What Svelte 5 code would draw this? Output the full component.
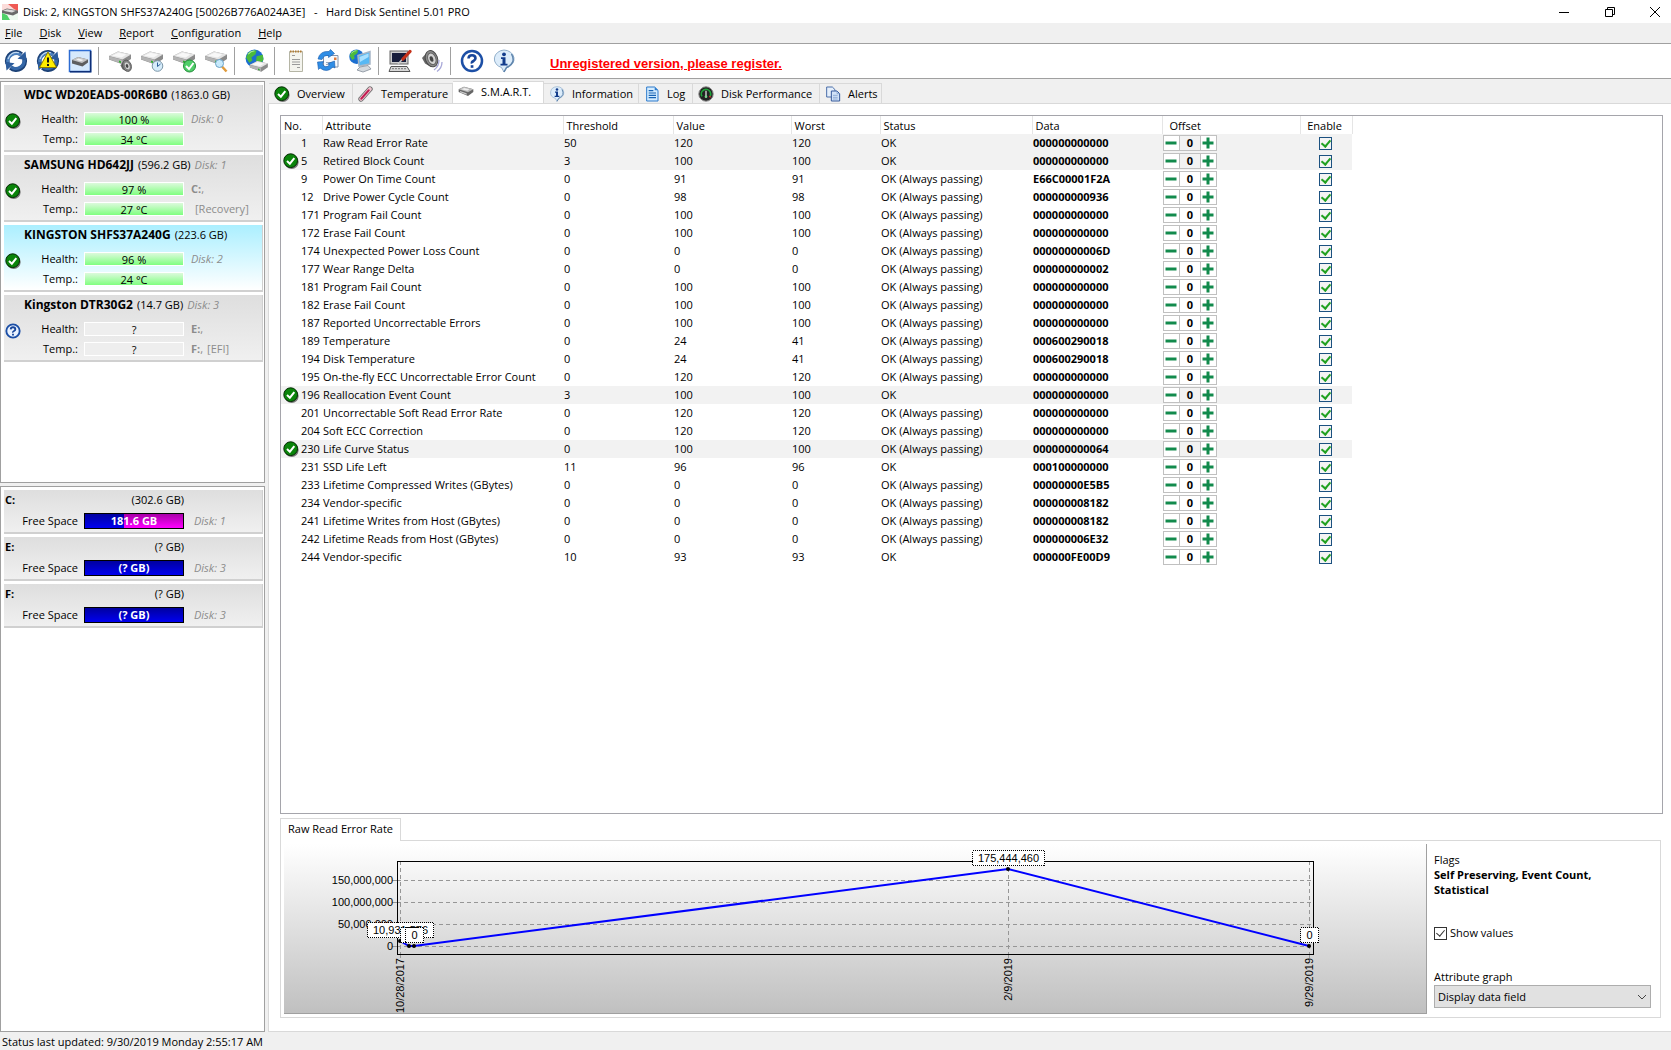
<script lang="ts">
  type Attribute = {
    no: number;
    name: string;
    threshold: number;
    value: number;
    worst: number;
    status: string;
    data: string;
    critical: boolean;
    icon: boolean;
    offset: number;
    enabled: boolean;
  };

  type Disk = {
    name: string;
    size: string;
    tag: string;
    health: string;
    temp: string;
    known: boolean;
    notes: { em?: string; drive?: string; label?: string }[];
  };

  const PASSING = 'OK (Always passing)';

  const menu = ['File', 'Disk', 'View', 'Report', 'Configuration', 'Help'];

  const toolbar = [
    [
      { icon: 'refresh', label: 'Refresh' },
      { icon: 'refresh-warn', label: 'Refresh problems' },
      { icon: 'disk-frame', label: 'Disk control' }
    ],
    [
      { icon: 'disk-speaker', label: 'Acoustic test' },
      { icon: 'disk-clock', label: 'Short self test' },
      { icon: 'disk-check', label: 'Extended self test' },
      { icon: 'disk-search', label: 'Surface test' }
    ],
    [{ icon: 'globe-disk', label: 'Online disk information' }],
    [
      { icon: 'report', label: 'Report' },
      { icon: 'mail', label: 'Send report' },
      { icon: 'network', label: 'Network status' }
    ],
    [
      { icon: 'configure', label: 'Configuration' },
      { icon: 'speaker', label: 'Sound alerts' }
    ],
    [
      { icon: 'help', label: 'Help' },
      { icon: 'info', label: 'About' }
    ]
  ];

  const disks: Disk[] = [
    { name: 'WDC WD20EADS-00R6B0', size: '1863.0 GB', tag: '', health: '100 %', temp: '34 °C', known: true, notes: [{ em: 'Disk: 0' }, {}] },
    { name: 'SAMSUNG HD642JJ', size: '596.2 GB', tag: 'Disk: 1', health: '97 %', temp: '27 °C', known: true, notes: [{ drive: 'C:' }, { label: '[Recovery]' }] },
    { name: 'KINGSTON SHFS37A240G', size: '223.6 GB', tag: '', health: '96 %', temp: '24 °C', known: true, notes: [{ em: 'Disk: 2' }, {}] },
    { name: 'Kingston DTR30G2', size: '14.7 GB', tag: 'Disk: 3', health: '?', temp: '?', known: false, notes: [{ drive: 'E:' }, { drive: 'F:', label: '[EFI]' }] }
  ];

  const partitions = [
    { letter: 'C:', size: '(302.6 GB)', free: '181.6 GB', disk: 'Disk: 1', used: 40 },
    { letter: 'E:', size: '(? GB)', free: '(? GB)', disk: 'Disk: 3', used: 100 },
    { letter: 'F:', size: '(? GB)', free: '(? GB)', disk: 'Disk: 3', used: 100 }
  ];

  const tabs = [
    { label: 'Overview', icon: 'ok' },
    { label: 'Temperature', icon: 'thermometer' },
    { label: 'S.M.A.R.T.', icon: 'disk' },
    { label: 'Information', icon: 'info' },
    { label: 'Log', icon: 'log' },
    { label: 'Disk Performance', icon: 'gauge' },
    { label: 'Alerts', icon: 'copy' }
  ];

  function attr(no: number, name: string, threshold: number, value: number, status: string, data: string, flags = '', worst = value): Attribute {
    return {
      no, name, threshold, value, worst, status, data,
      critical: flags !== '',
      icon: flags === 'icon',
      offset: 0,
      enabled: true
    };
  }

  let attributes = $state([
    attr(1, 'Raw Read Error Rate', 50, 120, 'OK', '000000000000', 'row'),
    attr(5, 'Retired Block Count', 3, 100, 'OK', '000000000000', 'icon'),
    attr(9, 'Power On Time Count', 0, 91, PASSING, 'E66C00001F2A'),
    attr(12, 'Drive Power Cycle Count', 0, 98, PASSING, '000000000936'),
    attr(171, 'Program Fail Count', 0, 100, PASSING, '000000000000'),
    attr(172, 'Erase Fail Count', 0, 100, PASSING, '000000000000'),
    attr(174, 'Unexpected Power Loss Count', 0, 0, PASSING, '00000000006D'),
    attr(177, 'Wear Range Delta', 0, 0, PASSING, '000000000002'),
    attr(181, 'Program Fail Count', 0, 100, PASSING, '000000000000'),
    attr(182, 'Erase Fail Count', 0, 100, PASSING, '000000000000'),
    attr(187, 'Reported Uncorrectable Errors', 0, 100, PASSING, '000000000000'),
    attr(189, 'Temperature', 0, 24, PASSING, '000600290018', '', 41),
    attr(194, 'Disk Temperature', 0, 24, PASSING, '000600290018', '', 41),
    attr(195, 'On-the-fly ECC Uncorrectable Error Count', 0, 120, PASSING, '000000000000'),
    attr(196, 'Reallocation Event Count', 3, 100, 'OK', '000000000000', 'icon'),
    attr(201, 'Uncorrectable Soft Read Error Rate', 0, 120, PASSING, '000000000000'),
    attr(204, 'Soft ECC Correction', 0, 120, PASSING, '000000000000'),
    attr(230, 'Life Curve Status', 0, 100, PASSING, '000000000064', 'icon'),
    attr(231, 'SSD Life Left', 11, 96, 'OK', '000100000000'),
    attr(233, 'Lifetime Compressed Writes (GBytes)', 0, 0, PASSING, '00000000E5B5'),
    attr(234, 'Vendor-specific', 0, 0, PASSING, '000000008182'),
    attr(241, 'Lifetime Writes from Host (GBytes)', 0, 0, PASSING, '000000008182'),
    attr(242, 'Lifetime Reads from Host (GBytes)', 0, 0, PASSING, '000000006E32'),
    attr(244, 'Vendor-specific', 10, 93, 'OK', '000000FE00D9')
  ]);

  let selectedDisk = $state(2);
  let activeTab = $state(2);
  let showValues = $state(true);
  let graphMode = $state('data');

  // chart geometry: 22px per 50 million, zero line at y = 102
  const PLOT_LEFT = 113;
  const PLOT_TOP = 17;
  const PLOT_BOTTOM = 110;
  const ZERO_Y = 102;
  const LAST_DAY = 701;
  const history = [
    { day: 0, value: 10931576, date: '10/28/2017' },
    { day: 7, value: 0, date: '' },
    { day: 11, value: 0, date: '' },
    { day: 469, value: 175444460, date: '2/9/2019' },
    { day: 701, value: 0, date: '9/29/2019' }
  ];
  const ticks = [0, 50000000, 100000000, 150000000];

  let chartWidth = $state(1142);
  let plotRight = $derived(chartWidth - 112);

  const toY = (value: number) => Math.round(ZERO_Y - (value / 50000000) * 22);
  let points = $derived(
    history.map((p) => {
      const text = p.value.toLocaleString('en-US');
      const commas = text.split(',').length - 1;
      return {
        ...p,
        text,
        x: Math.round(PLOT_LEFT + 3 + (p.day / LAST_DAY) * (plotRight - PLOT_LEFT - 8)),
        y: toY(p.value),
        boxWidth: (text.length - commas) * 6 + commas * 3 + 12
      };
    })
  );
  let dated = $derived(points.filter((p) => p.date));
  let line = $derived(points.map((p) => `${p.x},${p.y}`).join(' '));
</script>

{#snippet drive()}
  <path d="M1 7 10 2.500 23 5.500V10L15 15.500 1 10.500Z" fill="#8b8b8b" />
  <path d="M1 7 10 2.500 23 5.500 14.500 10.500Z" fill="#e4e4e4" />
  <path d="M4 6.800 10.500 3.800 18.500 5.600 13.500 8.600Z" fill="#f8f8f8" />
  <path d="M1 7.300V10.300L14.500 15V10.800Z" fill="#b4b4b4" />
  <path d="M11 11.600v1.800l2 .6v-1.800z" fill="#2fae2f" />
{/snippet}

{#snippet arrows()}
  <g fill="none" stroke-width="4.600">
    <path d="M3.600 14.500A8.600 8.600 0 0 1 17.500 5.500" stroke="#1d4277" />
    <path d="M20.400 9.500A8.600 8.600 0 0 1 6.500 18.500" stroke="#1d4277" />
    <path d="M3.800 13.500A8.400 8.400 0 0 1 17 6" stroke="#4a7fbd" stroke-width="3.200" />
    <path d="M20.200 10.500A8.400 8.400 0 0 1 7 18" stroke="#3568a8" stroke-width="3.200" />
    <path d="M4 10A8.500 8.500 0 0 1 15 3.800" stroke="#c3daf0" stroke-width="1.200" />
  </g>
  <path d="M21.500 2.500 22.500 11 13.500 9.800Z" fill="#2c5c9c" />
  <path d="M2.500 21.500 1.500 13 10.500 14.200Z" fill="#2c5c9c" />
{/snippet}

{#snippet globe()}
  <circle cx="10" cy="9" r="8.500" fill="#1c6fd0" />
  <path d="M4 3.500Q9 .5 12 1.500L11 5 7 8 8 11 5 13 2 8ZM12 7l6-1.500 .5 5-4 5-3-4Z" fill="#4cba3c" />
  <path d="M4 5Q7 1.500 10 2" stroke="#aef09a" fill="none" />
{/snippet}

{#snippet cone()}
  <path d="M2 9 6 4.500 11 1.500V18L5 14.500Z" fill="#666" />
  <ellipse cx="11.500" cy="9.700" rx="6" ry="8.300" transform="rotate(-20 11.500 9.700)" fill="#8a8a8a" stroke="#4b4b4b" />
  <ellipse cx="11.800" cy="9.800" rx="4" ry="6" transform="rotate(-20 11.800 9.800)" fill="#d2d2d2" stroke="#666" />
  <ellipse cx="11.500" cy="10" rx="1.800" ry="2.800" transform="rotate(-20 11.500 10)" fill="#444" />
{/snippet}

{#snippet icon(name: string)}
  <svg class="icon" viewBox="0 0 24 24" aria-hidden="true">
    {#if name === 'refresh'}
      {@render arrows()}
    {:else if name === 'refresh-warn'}
      {@render arrows()}
      <path d="M12 3 20.500 18.500H3.500Z" fill="#ffee00" stroke="#8a7a00" />
      <path d="M12 8.500v5M12 15v2" stroke="#111" stroke-width="2" />
    {:else if name === 'disk-frame'}
      <rect x="1.500" y="1.500" width="21" height="21" fill="#d6e9fc" stroke="#2d6cd2" stroke-width="1.500" />
      <path d="M22.700 2V22.700H2" fill="none" stroke="#0d2e77" stroke-width="1.500" />
      <path d="M4 11 10 8 20 10.500V13.500L14.500 17.500 4 14.500Z" fill="#5e5e5e" />
      <path d="M4 11 10 8 20 10.500 14 14Z" fill="#c4c4c4" />
      <path d="M8 10.800 10.500 9.600 15.500 11 13 12.300Z" fill="#f2f2f2" />
    {:else if name === 'disk-speaker'}
      {@render drive()}
      <g transform="translate(11 10) scale(.7)">{@render cone()}</g>
    {:else if name === 'disk-clock'}
      {@render drive()}
      <circle cx="17.500" cy="17" r="5.300" fill="#d6ecfa" stroke="#7c96a8" />
      <path d="M17.500 13.500V17.500L20.500 15" fill="none" stroke="#2d5f9a" />
    {:else if name === 'disk-check'}
      {@render drive()}
      <circle cx="17.500" cy="17" r="6" fill="#4fce68" stroke="#238c3a" />
      <path d="M14 17 17 20 21.500 14" fill="none" stroke="#fff" stroke-width="2" />
    {:else if name === 'disk-search'}
      {@render drive()}
      <path d="M18 17.500 22.500 22.500" stroke="#e09b3c" stroke-width="2.500" />
      <circle cx="15.500" cy="14.500" r="4" fill="#c8eafc" stroke="#6ba2c8" />
    {:else if name === 'globe-disk'}
      <g transform="scale(1.050)">{@render globe()}</g>
      <g transform="translate(5 10) scale(.82)">{@render drive()}</g>
    {:else if name === 'report'}
      <path d="M5.500 2.500H18.500V22.500H5.500Z" fill="#f4f4ee" stroke="#b5b5a5" />
      <path d="M6 2.500H18" stroke="#b07a32" stroke-width="2" stroke-dasharray="1.500 1" />
      <path d="M8 6.500h3M8 10.500h8M8 13h8M8 15.500h8M13 18.500h3" stroke="#9a9a9a" />
    {:else if name === 'mail'}
      <path d="M7.500 6.500H22V18H7.500Z" fill="#f6f9fd" stroke="#8293ab" />
      <path d="M10 13.500h6M10 15.500h5" stroke="#9aa9bd" />
      <path d="M18 8.500h2.500v2.500H18z" fill="#df7a3a" />
      <path d="M2 10Q4 1.500 13 2.500L14.500 .5 18.500 4.500 12.500 8.500 12.500 6.500Q7.500 6 6 10.500Z" fill="#2e8de6" stroke="#1559ab" stroke-width=".6" />
      <path d="M1.500 13 7.500 12.500 6.500 15Q9 20 13.500 16L12 14.500 18.500 12 19 19 17 18Q11 24.500 4 19L2.500 20.500Z" fill="#2e8de6" stroke="#1559ab" stroke-width=".6" />
    {:else if name === 'network'}
      <g transform="scale(.85)">{@render globe()}</g>
      <path d="M10 6.500 22 2.500V15L11 17Z" fill="#56b8f4" stroke="#a8b7c7" stroke-width="1.500" />
      <path d="M11.500 8 20.500 4.500V8L12 13Z" fill="#a9e1ff" />
      <path d="M12 18 20 16.500 23 20 15 23 9 21Z" fill="#d4d9de" stroke="#98a0aa" />
    {:else if name === 'configure'}
      <rect x="2" y="2" width="18" height="13" fill="#cdcdcd" stroke="#666" />
      <rect x="4" y="4" width="14" height="9" fill="#171d3b" />
      <path d="M3 17.500H19L22 22.500H1Z" fill="#d8d8d8" stroke="#555" />
      <path d="M4 19.700h14" stroke="#777" stroke-dasharray="2 1" />
      <path d="M10 15 16 8.500" stroke="#c9c9c9" stroke-width="1.500" />
      <path d="M15 10 22 2.500" stroke="#c42f17" stroke-width="3.200" stroke-linecap="round" />
    {:else if name === 'speaker'}
      {@render cone()}
      <path d="M14 21Q19 17.500 19 11M17 22.500Q22 19 22 13" fill="none" stroke="#a8a8d8" stroke-width="1.300" />
    {:else if name === 'help'}
      <circle cx="12" cy="12" r="10" fill="#fff" stroke="#1c4fa6" stroke-width="2.500" />
      <path d="M8.500 9.500Q8.700 6.300 12 6.300T15.500 9.300Q15.500 11 13.500 12T12 14.500" fill="none" stroke="#17459a" stroke-width="2.600" />
      <path d="M10.700 16.200h2.700v2.600h-2.700z" fill="#17459a" />
    {:else if name === 'info'}
      <path d="M12 1A10.500 9 0 0 1 15 18.500L12 23 9.500 18.500A10.500 9 0 0 1 12 1Z" fill="#dcecfa" stroke="#90aeca" />
      <path d="M19.500 5Q24.500 14 14.500 18.500L12 23" fill="none" stroke="#5e84ac" stroke-width="1.500" />
      <circle cx="12" cy="5.300" r="1.900" fill="#123c8c" />
      <path d="M9 8.300h4.500v6.500H15.500V16.500H8.500V14.800h2V10H9z" fill="#123c8c" />
    {:else if name === 'ok'}
      <circle cx="13" cy="13.500" r="10.500" fill="#777" />
      <circle cx="11.500" cy="11.500" r="10.300" fill="#0a840a" stroke="#032b03" stroke-width="1.500" />
      <path d="M6 12 10.300 16 17 7.700" fill="none" stroke="#fff" stroke-width="3" />
    {:else if name === 'unknown'}
      <circle cx="12" cy="12" r="10" fill="#eaf3ff" stroke="#1c4fa6" stroke-width="2.800" />
      <path d="M8.500 9.500Q8.700 6.300 12 6.300T15.500 9.300Q15.500 11 13.500 12T12 14.500" fill="none" stroke="#17459a" stroke-width="2.800" />
      <path d="M10.600 16h2.800v2.800h-2.800z" fill="#17459a" />
    {:else if name === 'thermometer'}
      <path d="M4.500 19.500 18 4.500" stroke="#6b6b6b" stroke-width="8" stroke-linecap="round" />
      <path d="M4.500 19.500 18 4.500" stroke="#eec4cf" stroke-width="5.500" stroke-linecap="round" />
      <path d="M5 19 16 6.500" stroke="#c21d52" stroke-width="3.200" stroke-linecap="round" />
    {:else if name === 'disk'}
      <path d="M1 8 9 4 23 8V12L15 18 1 12Z" fill="#666" />
      <path d="M1 8 9 4 23 8 15 12.500Z" fill="#bbb" />
      <path d="M5 8 9.500 6 17 8 14 10Z" fill="#eee" />
      <path d="M3 10.500 13 14v2L3 12.500Z" fill="#ccc" />
    {:else if name === 'log'}
      <path d="M4 1.500H16L21 6.500V22.500H4Z" fill="#d4ecff" stroke="#2c7bcc" stroke-width="1.500" />
      <path d="M16 1.500V6.500H21Z" fill="#2c7bcc" />
      <path d="M7 7h7M7 10.500h11M7 14h11M7 17.500h11" stroke="#1763b4" stroke-width="1.700" />
    {:else if name === 'gauge'}
      <circle cx="12" cy="12" r="10.800" fill="#222" stroke="#888" stroke-width="1.500" />
      <circle cx="12" cy="12" r="7" fill="none" stroke="#1fa33a" stroke-width="2.500" stroke-dasharray="28 16" transform="rotate(150 12 12)" />
      <path d="M12 17V7" stroke="#f2f2f2" stroke-width="1.800" />
      <path d="M17 15.500 19 17" stroke="#e33" stroke-width="2" />
      <circle cx="12" cy="16" r="2" fill="#7bd68c" />
    {:else if name === 'copy'}
      <path d="M2.500 1.500H11L15 5.500V16.500H2.500Z" fill="#e5effb" stroke="#4a6ea9" stroke-width="1.500" />
      <path d="M9.500 7.500H18L22 11.500V22.500H9.500Z" fill="#d2e3f8" stroke="#35599b" stroke-width="1.500" />
      <path d="M18 7.500V11.500H22M12 14h7M12 17h7M12 19.500h7" fill="none" stroke="#6f92c6" />
    {/if}
  </svg>
{/snippet}

<div class="window">
  <header class="titlebar">
    <svg class="app-icon" viewBox="0 0 16 16" aria-hidden="true">
      <path d="M0 0H16V8H0Z" fill="#fbdcda" />
      <path d="M6 0H16V7L12 5Z" fill="#ef5a54" />
      <path d="M0 8H16V16H0Z" fill="#eefaf0" />
      <path d="M0 9 5 11 8 16H0Z" fill="#4fd169" />
      <path d="M0 6.500 5 4.500 16 6.500V9L11 11.500 0 9Z" fill="#6a6a6a" />
      <path d="M1 6.800 5 5.300 14 6.800 10 8.500Z" fill="#dcdcdc" />
    </svg>
    <h1>Disk: 2, KINGSTON SHFS37A240G [50026B776A024A3E]&nbsp;&nbsp; -&nbsp;&nbsp; Hard Disk Sentinel 5.01 PRO</h1>
    <div class="window-buttons">
      <button aria-label="Minimize"><svg viewBox="0 0 10 10"><path d="M0 5.500H10" /></svg></button>
      <button aria-label="Restore"><svg viewBox="0 0 10 10"><path d="M.5 2.500H7.500V9.500H.5ZM2.500 2.500V.5H9.500V7.500H7.500" /></svg></button>
      <button aria-label="Close"><svg viewBox="0 0 10 10"><path d="M0 0 10 10M10 0 0 10" /></svg></button>
    </div>
  </header>

  <nav class="menu">
    {#each menu as item}
      <button><u>{item[0]}</u>{item.slice(1)}</button>
    {/each}
  </nav>

  <div class="toolbar">
    {#each toolbar as group}
      <div class="tool-group">
        {#each group as tool}
          <button aria-label={tool.label}>{@render icon(tool.icon)}</button>
        {/each}
      </div>
    {/each}
    <a class="register" href="#register">Unregistered version, please register.</a>
  </div>

  <div class="body">
    <aside>
      <div class="list disks">
        {#each disks as disk, i}
          <!-- svelte-ignore a11y_click_events_have_key_events, a11y_no_static_element_interactions -->
          <div class="card disk" class:selected={selectedDisk === i} onclick={() => (selectedDisk = i)}>
            <div class="disk-name">
              <b>{disk.name}</b>
              <span>({disk.size})</span>
              {#if disk.tag}<i>{disk.tag}</i>{/if}
            </div>
            <span class="disk-icon">{@render icon(disk.known ? 'ok' : 'unknown')}</span>
            {#each [['Health:', disk.health], ['Temp.:', disk.temp]] as [label, value], row}
              <span class="label">{label}</span>
              <span class="meter" class:known={disk.known}>{value}</span>
              <span class="note">
                {#if disk.notes[row].em}<i>{disk.notes[row].em}</i>{/if}
                {#if disk.notes[row].drive}<b>{disk.notes[row].drive}</b>,{/if}
                {#if disk.notes[row].label}<span class="volume">{disk.notes[row].label}</span>{/if}
              </span>
            {/each}
          </div>
        {/each}
      </div>

      <div class="list partitions">
        {#each partitions as part}
          <div class="card partition">
            <b class="letter">{part.letter}</b>
            <span class="size">{part.size}</span>
            <span class="label">Free Space</span>
            <span class="space">
              <span class="used" style="width: {part.used}%"></span>
              <b>{part.free}</b>
            </span>
            <i>{part.disk}</i>
          </div>
        {/each}
      </div>
    </aside>

    <main>
      <div class="tabs" role="tablist">
        {#each tabs as tab, i}
          <button role="tab" aria-selected={activeTab === i} class:active={activeTab === i} onclick={() => (activeTab = i)}>
            {@render icon(tab.icon)}{tab.label}
          </button>
        {/each}
      </div>

      <div class="page">
        <div class="table-box">
          <table>
            <colgroup>
              <col class="c-no" /><col class="c-name" /><col class="c-threshold" /><col class="c-value" /><col class="c-worst" />
              <col class="c-status" /><col class="c-data" /><col class="c-offset" /><col class="c-enable" />
            </colgroup>
            <thead>
              <tr>
                <th>No.</th><th>Attribute</th><th>Threshold</th><th>Value</th><th>Worst</th>
                <th>Status</th><th>Data</th><th class="offset-head">Offset</th><th class="enable-head">Enable</th>
              </tr>
            </thead>
            <tbody>
              {#each attributes as row}
                <tr class:critical={row.critical}>
                  <td>
                    <div class="no">
                      <span class="row-icon">{#if row.icon}{@render icon('ok')}{/if}</span>
                      <span>{row.no}</span>
                    </div>
                  </td>
                  <td>{row.name}</td>
                  <td>{row.threshold}</td>
                  <td>{row.value}</td>
                  <td>{row.worst}</td>
                  <td>{row.status}</td>
                  <td><b>{row.data}</b></td>
                  <td>
                    <div class="stepper">
                      <button aria-label="Decrease offset of {row.name}" onclick={() => row.offset--}>
                        <svg viewBox="0 0 14 14"><path d="M1.500 7H12.500" /></svg>
                      </button>
                      <b>{row.offset}</b>
                      <button aria-label="Increase offset of {row.name}" onclick={() => row.offset++}>
                        <svg viewBox="0 0 14 14"><path d="M1.500 7H12.500M7 1.500V12.500" /></svg>
                      </button>
                    </div>
                  </td>
                  <td class="enable">
                    <input type="checkbox" aria-label="Enable {row.name}" bind:checked={row.enabled} />
                  </td>
                </tr>
              {/each}
            </tbody>
          </table>
        </div>

        <div class="details">
          <div class="detail-tabs"><button>Raw Read Error Rate</button></div>
          <div class="detail-body">
            <div class="chart" bind:clientWidth={chartWidth}>
              <svg width={chartWidth} height="169" role="img" aria-label="Raw Read Error Rate history">
                <g class="grid">
                  {#each ticks as tick}
                    <path d="M{PLOT_LEFT - 5} {toY(tick) + 0.5}H{PLOT_LEFT}" />
                    <path class="dashed" d="M{PLOT_LEFT} {toY(tick) + 0.5}H{plotRight}" />
                  {/each}
                  {#each dated as p}
                    <path class="dashed" d="M{p.x + 0.5} {PLOT_TOP}V{PLOT_BOTTOM}" />
                    <path d="M{p.x + 0.5} {PLOT_BOTTOM}v4" />
                  {/each}
                </g>
                <rect class="frame" x={PLOT_LEFT + 0.5} y={PLOT_TOP + 0.5} width={plotRight - PLOT_LEFT - 1} height={PLOT_BOTTOM - PLOT_TOP} />
                {#each ticks as tick}
                  <text x={PLOT_LEFT - 4} y={toY(tick) + 4} text-anchor="end">{tick.toLocaleString('en-US')}</text>
                {/each}
                {#each dated as p}
                  <text transform="translate({p.x + 4} {PLOT_BOTTOM + 4}) rotate(-90)" text-anchor="end">{p.date}</text>
                {/each}
                <polyline class="series" points={line} />
                {#each points as p}
                  <circle cx={p.x} cy={p.y} r="2" />
                {/each}
                {#if showValues}
                  {#each points as p}
                    <rect class="tag" x={p.x - p.boxWidth / 2 + 0.5} y={p.y - 18.5} width={p.boxWidth} height="15" />
                    <text x={p.x + 0.5} y={p.y - 7} text-anchor="middle">{p.text}</text>
                  {/each}
                {/if}
              </svg>
            </div>

            <div class="options">
              <p class="flags">Flags<b>Self Preserving, Event Count, Statistical</b></p>
              <label class="show-values">
                <input type="checkbox" bind:checked={showValues} />Show values
              </label>
              <label for="graph-mode">Attribute graph</label>
              <div class="combo">
                <select id="graph-mode" bind:value={graphMode}>
                  <option value="data">Display data field</option>
                  <option value="value">Display value field</option>
                </select>
                <svg viewBox="0 0 10 6" aria-hidden="true"><path d="M1 1 5 5 9 1" /></svg>
              </div>
            </div>
          </div>
        </div>
      </div>
    </main>
  </div>

  <footer>Status last updated: 9/30/2019 Monday 2:55:17 AM</footer>
</div>

<style>
  :global(body) {
    margin: 0;
  }

  .window {
    display: flex;
    flex-direction: column;
    min-height: 100vh;
    background: #f0f0f0;
    color: #000;
    font-family: 'Open Sans', 'Noto Sans', sans-serif;
    font-size: 11px;
    line-height: 16px;
  }

  .window * {
    box-sizing: border-box;
  }

  button {
    padding: 0;
    border: 0;
    background: none;
    color: inherit;
    font: inherit;
  }

  .icon {
    display: block;
    flex: none;
    width: 16px;
    height: 16px;
  }

  i {
    color: #8c8c8c;
  }

  .titlebar {
    display: flex;
    align-items: center;
    height: 23px;
    padding-left: 2px;
    background: #fff;
  }

  .app-icon {
    width: 16px;
    height: 16px;
  }

  h1 {
    flex: 1;
    margin: 0 0 0 5px;
    font-size: 11px;
    font-weight: 400;
  }

  .window-buttons {
    display: flex;
  }

  .window-buttons button {
    display: grid;
    place-items: center;
    width: 46px;
    height: 20px;
  }

  .window-buttons button:last-child {
    width: 32px;
    margin-left: 6px;
  }

  .window-buttons svg {
    width: 10px;
    height: 10px;
    fill: none;
    stroke: #000;
  }

  .menu {
    display: flex;
    gap: 17px;
    height: 20px;
    padding-left: 5px;
  }

  .toolbar {
    display: flex;
    align-items: center;
    height: 36px;
    border-top: 1px solid #a0a0a0;
    border-bottom: 1px solid #a0a0a0;
    background: #fff;
  }

  .tool-group {
    display: flex;
  }

  .tool-group + .tool-group::before {
    content: '';
    width: 1px;
    margin: 0 5px 0 2px;
    background: #a0a0a0;
  }

  .tool-group button {
    display: grid;
    place-items: center;
    width: 32px;
    height: 28px;
  }

  .tool-group .icon {
    width: 24px;
    height: 24px;
  }

  .register {
    margin-left: 30px;
    padding-top: 5px;
    color: #f00;
    font: bold 13px/16px 'Liberation Sans', sans-serif;
  }

  .body {
    display: flex;
    flex: 1;
    gap: 3px;
    padding-top: 2px;
  }

  aside {
    display: flex;
    flex-direction: column;
    gap: 3px;
    width: 265px;
  }

  .list {
    display: flex;
    flex-direction: column;
    gap: 3px;
    padding: 3px 1px 3px 3px;
    border: 1px solid #a0a0a0;
    background: #fff;
  }

  .disks {
    flex: 400 0 0;
  }

  .partitions {
    flex: 547 0 0;
  }

  .card {
    display: grid;
    align-items: center;
    column-gap: 5px;
    border-right: 1px solid #d0d0d0;
    border-bottom: 2px solid #d0d0d0;
    background: linear-gradient(#dedede, #f0f0f0);
  }

  .disk {
    grid-template-columns: 20px 50px 100px 1fr;
    grid-template-rows: 24px 20px 20px;
    padding-bottom: 1px;
  }

  .disk.selected {
    background: linear-gradient(#abefff, #fff);
  }

  .disk-name {
    display: flex;
    grid-column: 1 / -1;
    align-self: start;
    gap: 4px;
    padding: 2px 0 0 20px;
    white-space: nowrap;
  }

  .disk-name b {
    font-size: 12px;
  }

  .disk-icon {
    grid-row: 2;
    grid-column: 1;
    align-self: end;
    padding-left: 1px;
  }

  .label {
    grid-column: 2;
    padding-right: 1px;
    text-align: right;
  }

  .meter {
    height: 14px;
    border: 1px solid #fff;
    background: #eee;
    line-height: 14px;
    text-align: center;
  }

  .meter.known {
    background: linear-gradient(#dcfadc, #80ff80);
  }

  .note {
    display: flex;
    padding-left: 2px;
    color: #8c8c8c;
  }

  .volume {
    padding-left: 4px;
  }

  .partition {
    grid-template-columns: 75px 100px 1fr;
    grid-template-rows: 21px 21px;
  }

  .letter {
    padding-left: 1px;
  }

  .size {
    grid-column: 2;
    text-align: right;
  }

  .partition .label {
    grid-area: 2 / 1;
  }

  .space {
    display: grid;
    grid-area: 2 / 2;
    height: 16px;
    border: 1px solid #000;
    background: linear-gradient(#a800a8, #f0f);
    color: #fff;
    line-height: 14px;
    text-align: center;
  }

  .space > * {
    grid-area: 1 / 1;
  }

  .used {
    background: linear-gradient(#0000a0, #0000f0);
  }

  .partition i {
    grid-area: 2 / 3;
    padding-left: 5px;
  }

  main {
    display: flex;
    flex: 1;
    flex-direction: column;
    min-width: 0;
  }

  .tabs {
    display: grid;
    grid-template-columns: 84px 100px 91px 95px 54px 127px 62px;
    align-items: end;
    height: 22px;
    padding-left: 1px;
  }

  .tabs button {
    display: flex;
    align-items: center;
    gap: 7px;
    height: 20px;
    padding-left: 5px;
    border-top: 1px solid #d9d9d9;
    border-right: 1px solid #d9d9d9;
    white-space: nowrap;
  }

  .tabs button.active {
    height: 22px;
    padding-bottom: 2px;
    background: #fff;
  }

  .page {
    display: flex;
    flex: 1;
    flex-direction: column;
    padding: 11px 8px 13px 11px;
    border: solid #d9d9d9;
    border-width: 1px 0 1px 1px;
    background: #fff;
  }

  .table-box {
    flex: 1;
    border: 1px solid #a5a5ab;
    background: #fff;
  }

  table {
    width: 1071px;
    border-collapse: collapse;
    table-layout: fixed;
  }

  .c-no { width: 41px; }
  .c-name { width: 241px; }
  .c-threshold { width: 110px; }
  .c-value { width: 118px; }
  .c-worst { width: 89px; }
  .c-status { width: 152px; }
  .c-data { width: 130px; }
  .c-offset { width: 138px; }
  .c-enable { width: 52px; }

  th {
    height: 18px;
    padding: 1px 0 0 3px;
    border-right: 1px solid #e5e5e5;
    font-weight: 400;
    text-align: left;
  }

  th.offset-head {
    padding-left: 7px;
  }

  th.enable-head {
    padding: 1px 3px 0 0;
    text-align: center;
  }

  td {
    height: 18px;
    padding: 0 0 0 1px;
    white-space: nowrap;
  }

  tr.critical {
    background: #f2f2f2;
  }

  .no {
    display: flex;
    align-items: center;
  }

  .row-icon {
    width: 19px;
    padding-left: 1px;
  }

  .stepper {
    display: grid;
    grid-template-columns: 15px 22px 15px;
    width: 54px;
    height: 16px;
    border: 1px solid #c0c0c0;
    line-height: 14px;
    text-align: center;
  }

  .stepper button {
    background: #fff;
  }

  .stepper b {
    border: solid #c0c0c0;
    border-width: 0 1px;
  }

  .stepper svg {
    display: block;
    width: 14px;
    height: 14px;
    stroke: #128a4c;
    stroke-width: 3;
  }

  td.enable {
    padding: 0 1px 0 0;
    line-height: 14px;
    text-align: center;
  }

  input[type='checkbox'] {
    display: inline-grid;
    place-items: center;
    width: 13px;
    height: 13px;
    margin: 0;
    border: 1px solid #1c5180;
    background: #f4f4f4;
    appearance: none;
    vertical-align: middle;
  }

  input[type='checkbox']:checked::after {
    content: '';
    width: 4px;
    height: 7px;
    margin-bottom: 2px;
    border: solid #21a121;
    border-width: 0 2px 2px 0;
    transform: rotate(40deg);
  }

  .details {
    margin-right: 2px;
    padding-top: 4px;
  }

  .detail-tabs {
    display: flex;
    height: 23px;
    border-bottom: 1px solid #d9d9d9;
  }

  .detail-tabs button {
    height: 23px;
    padding: 0 7px 2px;
    border: 1px solid #d9d9d9;
    border-bottom: 0;
    background: #fff;
  }

  .detail-body {
    display: flex;
    padding: 3px 9px 3px 3px;
    border: 1px solid #d9d9d9;
    border-top: 0;
  }

  .chart {
    flex: 1;
    min-width: 0;
    height: 170px;
    border-right: 1px solid #a0a0a0;
    border-bottom: 1px solid #a0a0a0;
    background: linear-gradient(#fff, #c0c0c0);
    overflow: hidden;
  }

  .chart svg {
    display: block;
  }

  .chart text {
    font: 11px 'Liberation Sans', sans-serif;
  }

  .grid path {
    stroke: #969696;
  }

  .grid .dashed {
    stroke-dasharray: 4 3;
  }

  .frame {
    fill: none;
    stroke: #000;
  }

  .series {
    fill: none;
    stroke: #00f;
    stroke-width: 2;
  }

  .tag {
    fill: #fff;
    stroke: #000;
    stroke-dasharray: 1 1;
    shape-rendering: crispEdges;
  }

  .options {
    display: flex;
    flex-direction: column;
    width: 224px;
    padding: 8px 0 4px 7px;
  }

  .flags {
    margin: 0 0 28px;
    line-height: 15px;
  }

  .flags b {
    display: block;
    width: 180px;
  }

  .show-values {
    display: flex;
    align-items: center;
    gap: 3px;
    margin-bottom: 28px;
  }

  .show-values input[type='checkbox'] {
    border-color: #333;
    background: #fff;
  }

  .show-values input[type='checkbox']:checked::after {
    border-color: #333;
    border-width: 0 1px 1px 0;
  }

  .combo {
    display: grid;
    align-items: center;
  }

  .combo > * {
    grid-area: 1 / 1;
  }

  select {
    height: 23px;
    padding: 0 3px;
    border: 1px solid #adadad;
    border-radius: 0;
    background: #e1e1e1;
    color: inherit;
    font: inherit;
    appearance: none;
  }

  .combo svg {
    justify-self: end;
    width: 10px;
    height: 6px;
    margin-right: 4px;
    fill: none;
    stroke: #444;
    pointer-events: none;
  }

  footer {
    height: 18px;
    padding: 2px;
  }
</style>
